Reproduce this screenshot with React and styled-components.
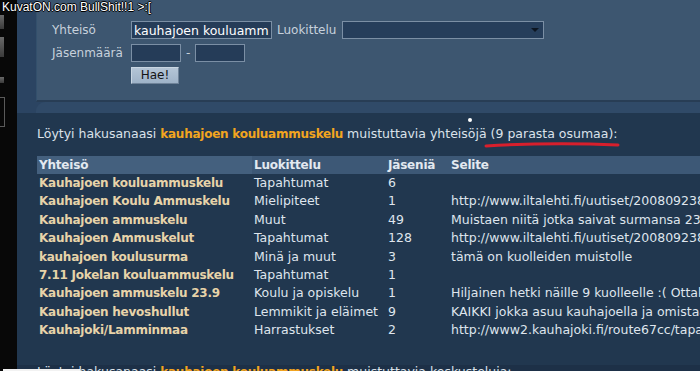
import React from 'react'
import styled, { createGlobalStyle } from 'styled-components'

const GlobalStyle = createGlobalStyle`
  html, body {
    margin: 0;
    padding: 0;
    background: #080808;
    overflow: hidden;
  }
`

const rows = [
  ['Kauhajoen kouluammuskelu', 'Tapahtumat', '6', ''],
  ['Kauhajoen Koulu Ammuskelu', 'Mielipiteet', '1', 'http://www.iltalehti.fi/uutiset/200809238363206_uu.shtml'],
  ['Kauhajoen ammuskelu', 'Muut', '49', 'Muistaen niitä jotka saivat surmansa 23.9.2008'],
  ['Kauhajoen Ammuskelut', 'Tapahtumat', '128', 'http://www.iltalehti.fi/uutiset/200809238363206_uu.shtml'],
  ['kauhajoen koulusurma', 'Minä ja muut', '3', 'tämä on kuolleiden muistolle'],
  ['7.11 Jokelan kouluammuskelu', 'Tapahtumat', '1', ''],
  ['Kauhajoen ammuskelu 23.9', 'Koulu ja opiskelu', '1', 'Hiljainen hetki näille 9 kuolleelle :( Ottakaa osaa'],
  ['Kauhajoen hevoshullut', 'Lemmikit ja eläimet', '9', 'KAIKKI jokka asuu kauhajoella ja omistaa hevosen'],
  ['Kauhajoki/Lamminmaa', 'Harrastukset', '2', 'http://www2.kauhajoki.fi/route67cc/tapahtumat'],
]

const App = () => {
  return (
    <Page>
      <GlobalStyle />
      <Strip>
        <StripBit $h={14} $top={15} />
        <StripBit $h={20} $top={8} />
        <StripBit $h={6} $top={20} />
        <StripBit $h={28} $top={14} $outline />
      </Strip>
      <Main>
        <Top>
          <Panel>
            <Form>
              <Label>Yhteisö</Label>
              <Line>
                <TextInput $w={141} value="kauhajoen kouluammuskelu" readOnly />
                <Label>Luokittelu</Label>
                <Select>
                  <Arrow />
                </Select>
              </Line>
              <Label>Jäsenmäärä</Label>
              <Line>
                <TextInput $w={50} readOnly />
                <Dash>-</Dash>
                <TextInput $w={50} readOnly />
              </Line>
              <span />
              <Line>
                <Button>Hae!</Button>
              </Line>
            </Form>
          </Panel>
          <Band />
        </Top>
        <Content>
          <Intro>
            Löytyi hakusanaasi <Hit>kauhajoen kouluammuskelu</Hit> muistuttavia yhteisöjä (9 parasta osumaa):
          </Intro>
          <Table>
            <colgroup>
              <col style={{ width: 215 }} />
              <col style={{ width: 134 }} />
              <col style={{ width: 63 }} />
              <col style={{ width: 400 }} />
            </colgroup>
            <thead>
              <tr>
                <Th $first>Yhteisö</Th>
                <Th>Luokittelu</Th>
                <Th>Jäseniä</Th>
                <Th>Selite</Th>
              </tr>
            </thead>
            <tbody>
              {rows.map((r) => (
                <tr key={r[0]}>
                  <Name>{r[0]}</Name>
                  <Td>{r[1]}</Td>
                  <Td>{r[2]}</Td>
                  <Td>{r[3]}</Td>
                </tr>
              ))}
            </tbody>
          </Table>
        </Content>
        <Next>
          <NextLine>
            Löytyi hakusanaasi <Hit>kauhajoen kouluammuskelu</Hit> muistuttavia keskusteluja:
          </NextLine>
        </Next>
      </Main>
      <Watermark>KuvatON.com BullShit!!1 &gt;:[</Watermark>
      <Scribble width="700" height="371" viewBox="0 0 700 371">
        <path d="M486 146 Q552 142 618 145" stroke="#d81f2c" strokeWidth="3" fill="none" strokeLinecap="round" />
        <circle cx="470" cy="120" r="2" fill="#ffffff" />
      </Scribble>
      <Tray />
    </Page>
  )
}

const Page = styled.div`
  position: relative;
  display: flex;
  width: 700px;
  height: 371px;
  overflow: hidden;
  font-family: "DejaVu Sans", Verdana, sans-serif;
`

const Strip = styled.div`
  width: 17px;
  flex-shrink: 0;
  background: #080808;
  display: flex;
  flex-direction: column;
`

const StripBit = styled.div`
  width: 4px;
  height: ${p => p.$h}px;
  margin-top: ${p => p.$top}px;
  background: ${p => p.$outline ? 'transparent' : 'linear-gradient(#6a6a6a, #3a3a3a)'};
  border: ${p => p.$outline ? '1px solid #5a5a5a' : 'none'};
  border-left: none;
`

const Main = styled.div`
  flex: 1;
  min-width: 0;
  display: flex;
  flex-direction: column;
  background: #21374f;
  white-space: nowrap;
`

const Top = styled.div`
  background: #2b4462;
  padding-left: 19px;
`

const Panel = styled.div`
  height: 79px;
  padding: 21px 0 0 15px;
  background: #3d5670;
  border-left: 1px solid #33506c;
  border-bottom: 2px solid #283d55;
`

const Band = styled.div`
  height: 11px;
  background: #304a68;
  border-top-left-radius: 9px;
`

const Form = styled.div`
  display: grid;
  grid-template-columns: 79px auto;
  row-gap: 5px;
  align-items: center;
`

const Label = styled.span`
  color: #c7d1dc;
  font-size: 12px;
`

const Line = styled.div`
  display: flex;
  align-items: center;
  gap: 5px;
`

const TextInput = styled.input`
  box-sizing: border-box;
  width: ${p => p.$w}px;
  height: 18px;
  margin: 0;
  padding: 0 2px;
  border: 1px solid #7b8fa5;
  background: #253c58;
  color: #ffffff;
  font-family: "DejaVu Sans", Verdana, sans-serif;
  font-size: 12.5px;
  outline: none;
`

const Select = styled.div`
  box-sizing: border-box;
  width: 202px;
  height: 18px;
  margin-left: 1px;
  border: 1px solid #7b8fa5;
  background: #263e5b;
  display: flex;
  align-items: center;
  justify-content: flex-end;
  padding-right: 4px;
`

const Arrow = styled.span`
  width: 0;
  height: 0;
  border-left: 4px solid transparent;
  border-right: 4px solid transparent;
  border-top: 4px solid #0d1622;
`

const Dash = styled.span`
  color: #c7d1dc;
  font-size: 12px;
  width: 4px;
`

const Button = styled.button`
  box-sizing: border-box;
  width: 48px;
  height: 17px;
  margin: 0;
  padding: 0;
  border: 1px solid #c9d6e2;
  border-right-color: #6f8399;
  border-bottom-color: #6f8399;
  background: linear-gradient(#b4c5d6, #9fb3c8);
  color: #141414;
  font-family: "DejaVu Sans", Verdana, sans-serif;
  font-size: 12px;
  line-height: 15px;
`

const Content = styled.div`
  padding: 12px 0 0 20px;
`

const Intro = styled.p`
  margin: 0 0 13px;
  color: #dbe2ea;
  font-size: 12.5px;
  line-height: 17px;
`

const Hit = styled.b`
  color: #f2a520;
  font-size: 12px;
  letter-spacing: -0.25px;
`

const Table = styled.table`
  table-layout: fixed;
  width: 812px;
  border-collapse: collapse;
  font-size: 12.5px;
`

const Th = styled.th`
  text-align: left;
  height: 18px;
  padding: 0 0 0 2px;
  background: ${p => p.$first ? '#44607e' : '#3d5876'};
  color: #e3e9f0;
  font-size: 12px;
  font-weight: bold;
  letter-spacing: -0.2px;
  line-height: 18px;
`

const Td = styled.td`
  height: 18.4px;
  padding: 0 0 0 2px;
  color: #dfe5ed;
  line-height: 18.4px;
  overflow: visible;
`

const Name = styled(Td)`
  color: #e7d3a9;
  font-size: 12px;
  font-weight: bold;
  letter-spacing: -0.25px;
`

const Next = styled.div`
  margin-top: 25px;
  padding: 0 0 0 20px;
  background: #1d3047;
  flex: 1;
`

const NextLine = styled.p`
  margin: 0;
  color: #dbe2ea;
  font-size: 12.5px;
  line-height: 13px;
`

const Watermark = styled.div`
  position: absolute;
  top: 0;
  left: 2px;
  font-family: "Liberation Sans", Arial, sans-serif;
  font-size: 12px;
  line-height: 14px;
  color: #ffffff;
  text-shadow: -1px 0 #000, 1px 0 #000, 0 -1px #000, 0 1px #000;
`

const Scribble = styled.svg`
  position: absolute;
  top: 0;
  left: 0;
  pointer-events: none;
`

const Tray = styled.div`
  position: absolute;
  left: 3px;
  bottom: 0;
  width: 77px;
  height: 2px;
  background: #f2f2f2;
`

export default App
